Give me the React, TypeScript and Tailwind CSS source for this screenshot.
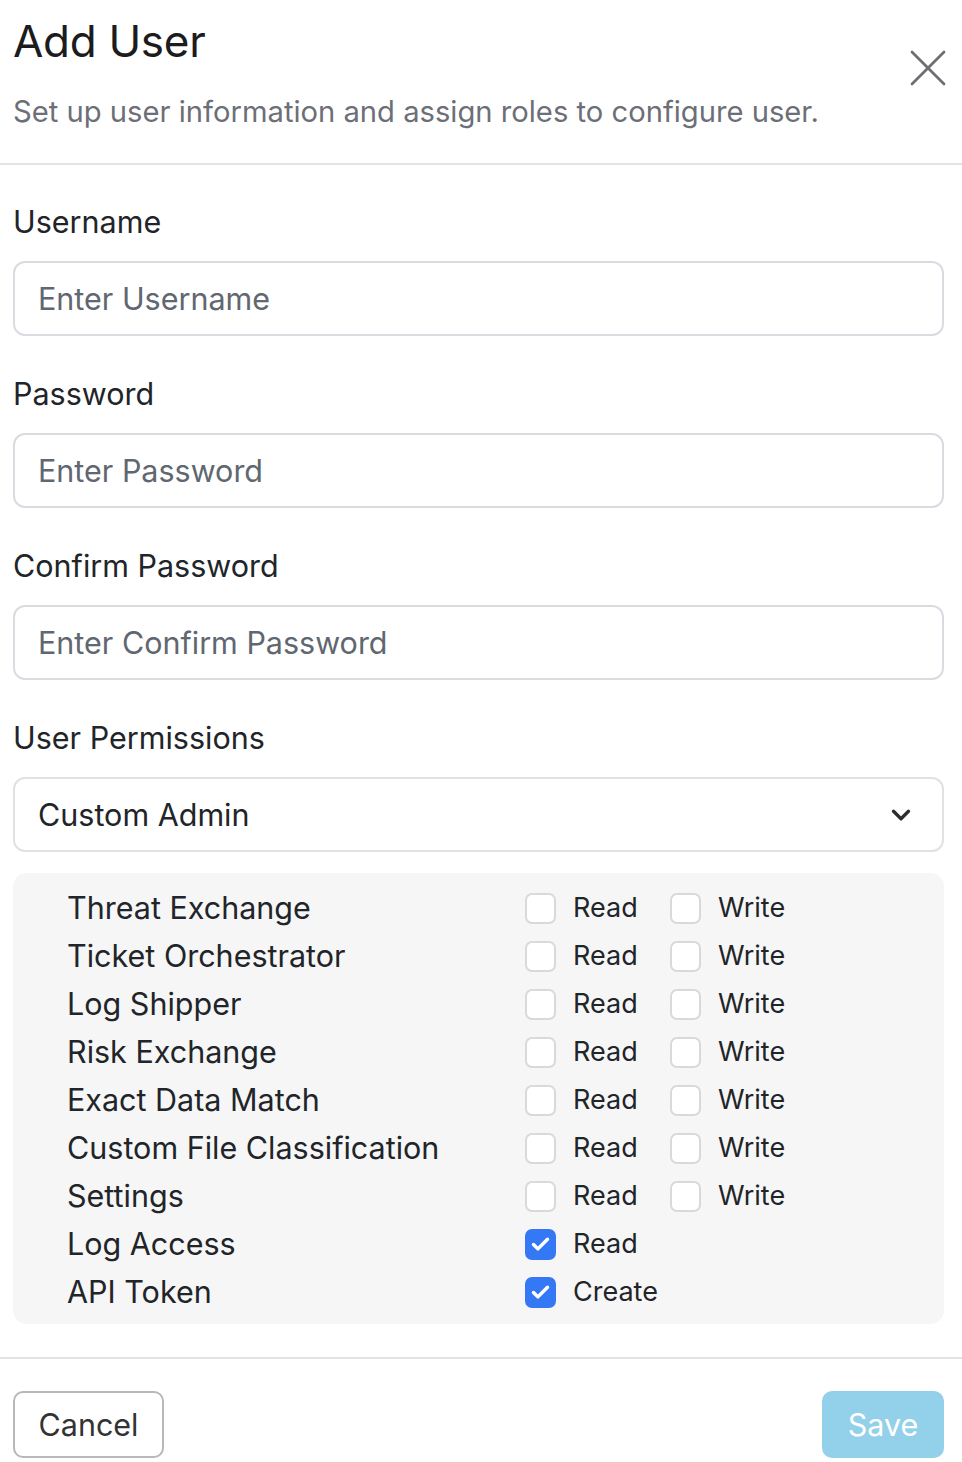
import { Check, ChevronDown, X } from "lucide-react";

type Permission = {
  name: string;
  options: { label: string; checked: boolean }[];
};

const permissions: Permission[] = [
  { name: "Threat Exchange", options: [{ label: "Read", checked: false }, { label: "Write", checked: false }] },
  { name: "Ticket Orchestrator", options: [{ label: "Read", checked: false }, { label: "Write", checked: false }] },
  { name: "Log Shipper", options: [{ label: "Read", checked: false }, { label: "Write", checked: false }] },
  { name: "Risk Exchange", options: [{ label: "Read", checked: false }, { label: "Write", checked: false }] },
  { name: "Exact Data Match", options: [{ label: "Read", checked: false }, { label: "Write", checked: false }] },
  { name: "Custom File Classification", options: [{ label: "Read", checked: false }, { label: "Write", checked: false }] },
  { name: "Settings", options: [{ label: "Read", checked: false }, { label: "Write", checked: false }] },
  { name: "Log Access", options: [{ label: "Read", checked: true }] },
  { name: "API Token", options: [{ label: "Create", checked: true }] },
];

function Field({ label, placeholder }: { label: string; placeholder: string }) {
  return (
    <div className="flex flex-col">
      <label className="mb-[21px] text-[30.5px] leading-[36px] text-[#212529]">{label}</label>
      <input
        className="h-[75px] w-full rounded-[12px] border-2 border-[#d9dbe0] bg-white px-[23px] text-[30.5px] text-[#212529] outline-none placeholder:text-[#606770]"
        placeholder={placeholder}
        type="text"
      />
    </div>
  );
}

function Checkbox({ checked }: { checked: boolean }) {
  return checked ? (
    <span className="flex h-[31px] w-[31px] items-center justify-center rounded-[7px] bg-[#3478f6]">
      <Check className="h-[21px] w-[21px] text-white" strokeWidth={4} />
    </span>
  ) : (
    <span className="h-[31px] w-[31px] rounded-[7px] border-2 border-[#d9d9d9] bg-white" />
  );
}

export default function App() {
  return (
    <div className="min-h-[1462px] w-[962px] bg-white font-['Inter',sans-serif] text-[#212529]">
      <header className="relative border-b-2 border-[#e3e3e6] px-[13px] pb-[34px] pt-[13px]">
        <h1 className="text-[44px] font-normal leading-[56px] tracking-[-0.3px] text-[#1c1c1e]">Add User</h1>
        <p className="mt-[25px] text-[29.2px] leading-[35px] text-[#6c6f77]">
          Set up user information and assign roles to configure user.
        </p>
        <button className="absolute right-[2px] top-[36px] text-[#6e6e73]" type="button">
          <X className="h-[64px] w-[64px]" strokeWidth={1.05} />
        </button>
      </header>

      <main className="flex flex-col gap-[40px] pl-[13px] pr-[18px] pt-[39px]">
        <Field label="Username" placeholder="Enter Username" />
        <Field label="Password" placeholder="Enter Password" />
        <Field label="Confirm Password" placeholder="Enter Confirm Password" />

        <div className="flex flex-col">
          <label className="mb-[21px] text-[30.5px] leading-[36px]">User Permissions</label>
          <div className="flex h-[75px] items-center justify-between rounded-[12px] border-2 border-[#e1e1e4] bg-white pl-[23px] pr-[26px]">
            <span className="text-[30.5px] text-[#212529]">Custom Admin</span>
            <ChevronDown className="h-[30px] w-[30px] text-[#2a2e33]" strokeWidth={2.6} />
          </div>

          <div className="mt-[21px] rounded-[14px] bg-[#f6f6f6] pb-[8px] pl-[54px] pt-[11px]">
            {permissions.map((p) => (
              <div key={p.name} className="flex h-[48px] items-center">
                <span className="w-[458px] text-[30.5px] text-[#212529]">{p.name}</span>
                {p.options.map((o) => (
                  <label key={o.label} className="flex w-[145px] items-center gap-[17px]">
                    <Checkbox checked={o.checked} />
                    <span className="text-[27px] text-[#212529]">{o.label}</span>
                  </label>
                ))}
              </div>
            ))}
          </div>
        </div>
      </main>

      <footer className="mt-[33px] flex items-center justify-between border-t-2 border-[#e3e3e6] pl-[13px] pr-[18px] pt-[32px]">
        <button
          className="h-[67px] w-[151px] rounded-[10px] border-2 border-[#b8b8b8] bg-white text-[30.5px] text-[#333]"
          type="button"
        >
          Cancel
        </button>
        <button className="h-[67px] w-[122px] rounded-[10px] bg-[#93d0ea] text-[30.5px] text-white" type="button">
          Save
        </button>
      </footer>
    </div>
  );
}
